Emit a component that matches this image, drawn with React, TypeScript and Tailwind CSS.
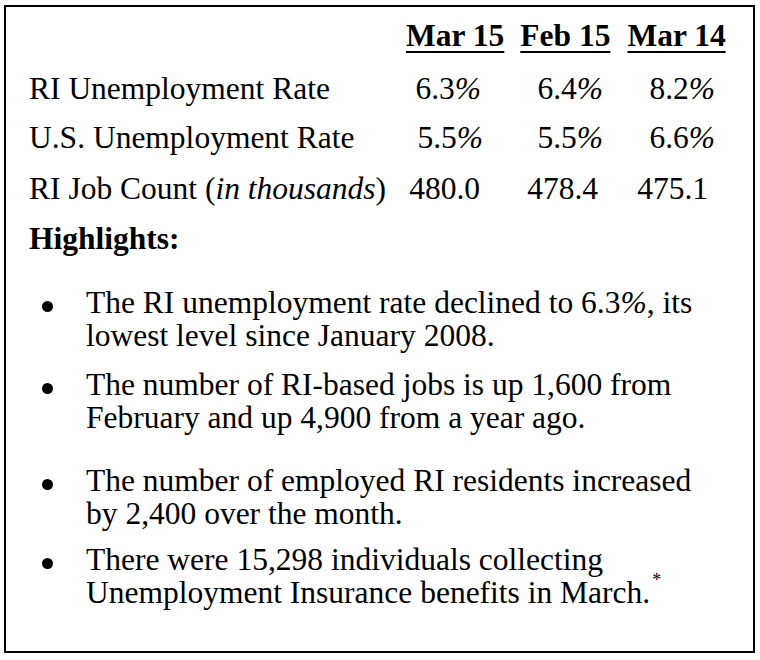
import React from "react";

const serif = { fontFamily: '"Liberation Serif", "Times New Roman", serif' };

function Pct({ v }: { v: string }) {
  return (
    <>
      {v}
      <i>%</i>
    </>
  );
}

function Bullet() {
  return (
    <span className="w-[57px] shrink-0 pl-[13px] pt-[15px]">
      <span className="block w-[11px] h-[11px] rounded-full bg-black" />
    </span>
  );
}

export default function App() {
  return (
    <div className="w-[760px] h-[660px] bg-white text-black" style={serif}>
      <div className="ml-[4px] pt-[5px]">
        <div className="w-[751px] h-[648px] border-2 border-black pl-[23px] text-[31.5px]">
          {/* header */}
          <div className="flex h-[53px] leading-[50px] mt-[4px] font-bold">
            <span className="ml-[377px] underline decoration-2 underline-offset-[5px]">Mar 15</span>
            <span className="ml-[16px] underline decoration-2 underline-offset-[5px]">Feb 15</span>
            <span className="ml-[17px] underline decoration-2 underline-offset-[5px]">Mar 14</span>
          </div>
          <div className="flex h-[49px] leading-[50px]">
            <span className="w-[371px]">RI Unemployment Rate</span>
            <span className="w-[81px] text-right">
              <Pct v="6.3" />
            </span>
            <span className="w-[122px] text-right">
              <Pct v="6.4" />
            </span>
            <span className="w-[112px] text-right">
              <Pct v="8.2" />
            </span>
          </div>
          <div className="flex h-[51px] leading-[50px]">
            <span className="w-[371px]">U.S. Unemployment Rate</span>
            <span className="w-[83px] text-right">
              <Pct v="5.5" />
            </span>
            <span className="w-[120px] text-right">
              <Pct v="5.5" />
            </span>
            <span className="w-[112px] text-right">
              <Pct v="6.6" />
            </span>
          </div>
          <div className="flex h-[50px] leading-[50px]">
            <span className="w-[371px]">
              RI Job Count (<i>in thousands</i>)
            </span>
            <span className="w-[80px] text-right">480.0</span>
            <span className="w-[118px] text-right">478.4</span>
            <span className="w-[110px] text-right">475.1</span>
          </div>
          <div className="h-[72px] leading-[50px] font-bold">Highlights:</div>
          <div className="leading-[33px]">
            <div className="flex">
              <Bullet />
              <div>
                The RI unemployment rate declined to 6.3<i>%</i>, its
                <br />
                lowest level since January 2008.
              </div>
            </div>
            <div className="flex mt-[16px]">
              <Bullet />
              <div>
                The number of RI-based jobs is up 1,600 from
                <br />
                February and up 4,900 from a year ago.
              </div>
            </div>
            <div className="flex mt-[30px]">
              <Bullet />
              <div>
                The number of employed RI residents increased
                <br />
                by 2,400 over the month.
              </div>
            </div>
            <div className="flex mt-[13px]">
              <Bullet />
              <div>
                There were 15,298 individuals collecting
                <br />
                Unemployment Insurance benefits in March.
                <span className="relative -top-[17px] ml-[2px] text-[18px] leading-none">*</span>
              </div>
            </div>
          </div>
        </div>
      </div>
    </div>
  );
}
